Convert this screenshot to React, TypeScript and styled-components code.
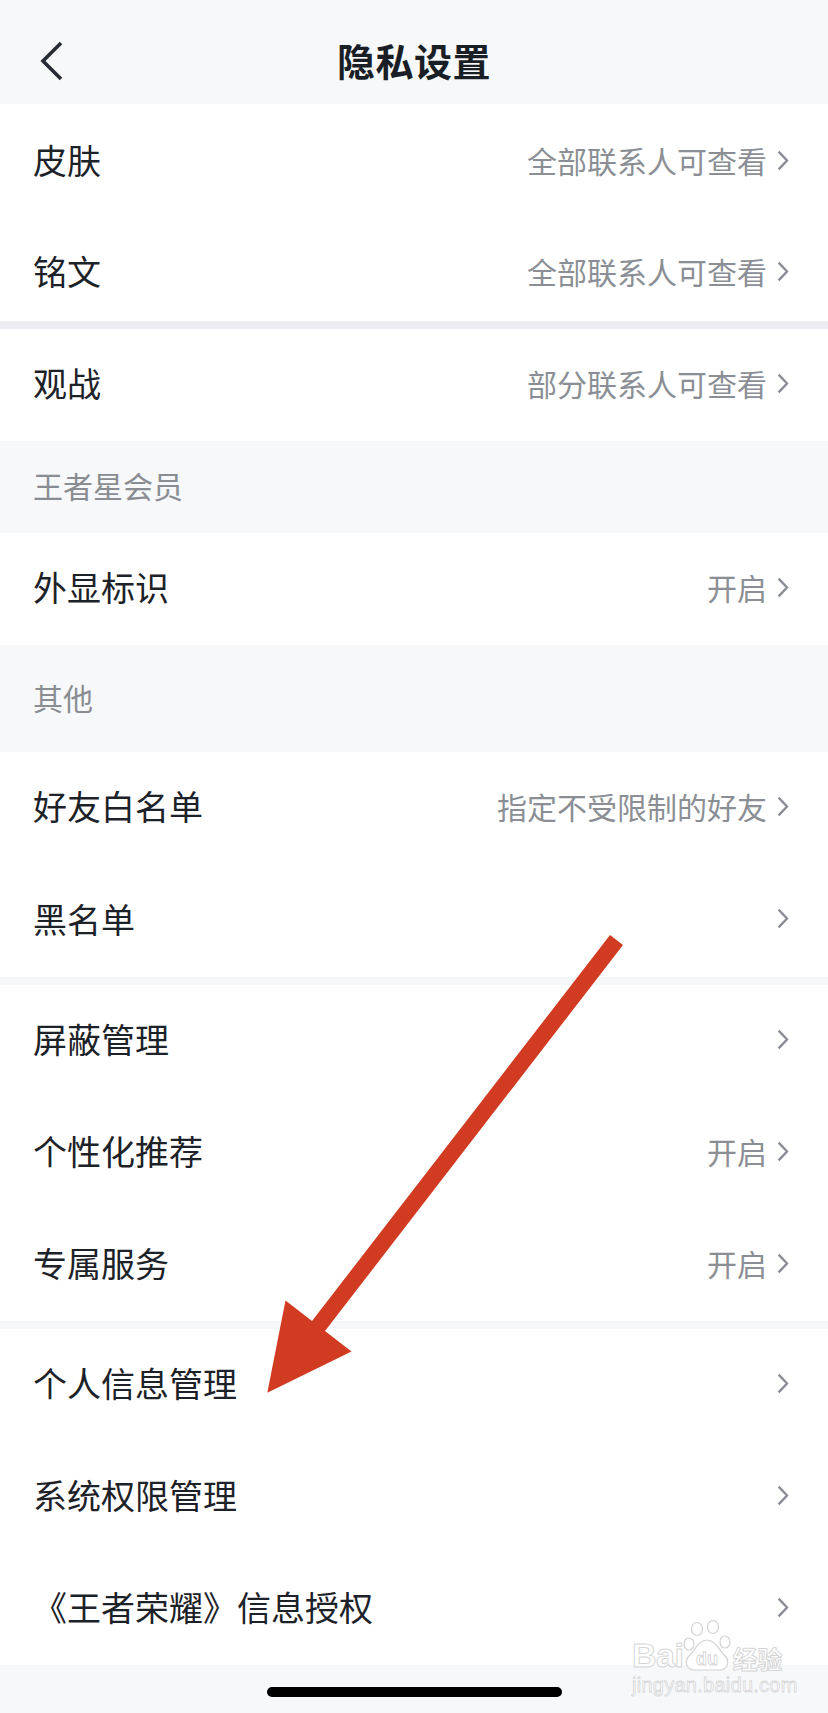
import React from "react";
import styled, { createGlobalStyle } from "styled-components";

const Global = createGlobalStyle`
  html, body { margin: 0; padding: 0; background: #f7f8fa; }
  body { font-family: "Noto Sans CJK SC", "Noto Sans", sans-serif; }
  * { box-sizing: border-box; }
`;

const Page = styled.div`
  position: relative;
  width: 828px;
  min-height: 1713px;
  background: #f7f8fa;
  overflow: hidden;
`;

const Header = styled.header`
  display: grid;
  grid-template-columns: 1fr auto 1fr;
  align-items: center;
  height: 104px;
  padding-top: 16px;
  background: #f7f8fa;
`;

const BackButton = styled.div`
  display: flex;
  align-items: center;
  padding-left: 40px;
  margin-top: 2px;
`;

const Title = styled.h1`
  margin: 0;
  font-size: 38px;
  line-height: 1;
  font-weight: 700;
  color: #1a1f26;
  letter-spacing: 0.5px;
`;

const Section = styled.section`
  background: #ffffff;
`;

const Row = styled.div<{ $h?: number; $pt?: number }>`
  display: flex;
  align-items: center;
  justify-content: space-between;
  height: ${(p) => p.$h ?? 112}px;
  padding: ${(p) => p.$pt ?? 0}px 39px 4px 33px;
`;

const Label = styled.span`
  font-size: 34px;
  line-height: 1;
  color: #1d2228;
  white-space: nowrap;
`;

const Trail = styled.div`
  display: flex;
  align-items: center;
`;

const Value = styled.span`
  font-size: 30px;
  line-height: 1;
  color: #8b8f95;
  margin-right: 10px;
  white-space: nowrap;
`;

const GroupTitle = styled.div<{ $h: number }>`
  display: flex;
  align-items: center;
  height: ${(p) => p.$h}px;
  padding: 0 0 4px 33px;
  font-size: 30px;
  line-height: 1;
  color: #898d92;
  background: #f7f8fa;
`;

const Gap = styled.div<{ $c: string }>`
  height: 8px;
  background: ${(p) => p.$c};
`;

const Bottom = styled.div`
  display: flex;
  justify-content: center;
  height: 48px;
  padding-top: 22px;
  background: #f7f8fa;
`;

const HomeBar = styled.div`
  width: 295px;
  height: 10px;
  border-radius: 5px;
  background: #000;
`;

const Overlay = styled.svg`
  position: absolute;
  left: 0;
  top: 0;
  pointer-events: none;
`;

const Watermark = styled.div`
  position: absolute;
  left: 632px;
  top: 1620px;
  display: flex;
  flex-direction: column;
  pointer-events: none;
`;

const MarkTop = styled.div`
  display: flex;
  align-items: flex-end;
`;

const MarkWord = styled.span<{ $size: number }>`
  font-family: "Liberation Sans", Arial, sans-serif;
  font-weight: 700;
  font-size: ${(p) => p.$size}px;
  line-height: 1;
  color: rgba(255, 255, 255, 0.85);
  -webkit-text-stroke: 1px rgba(200, 200, 200, 0.75);
  letter-spacing: -0.5px;
`;

const MarkCjk = styled.span`
  font-family: "Noto Sans CJK SC", sans-serif;
  font-weight: 700;
  font-size: 25px;
  line-height: 1;
  color: rgba(255, 255, 255, 0.85);
  -webkit-text-stroke: 1px rgba(200, 200, 200, 0.75);
  margin-left: 1px;
  margin-bottom: 1px;
`;

const MarkUrl = styled.span`
  font-family: "Liberation Sans", Arial, sans-serif;
  font-size: 21px;
  line-height: 1;
  color: rgba(255, 255, 255, 0.85);
  -webkit-text-stroke: 0.8px rgba(200, 200, 200, 0.75);
  letter-spacing: 0.3px;
  transform: scaleX(0.95);
  transform-origin: left center;
  white-space: nowrap;
  margin-top: 2px;
`;

const Chevron = () => (
  <svg width="12" height="21" viewBox="0 0 12 21">
    <polyline
      points="1.6,1.6 10,10.5 1.6,19.4"
      fill="none"
      stroke="#8a8e94"
      strokeWidth="2.4"
      strokeLinejoin="miter"
    />
  </svg>
);

const BackIcon = () => (
  <svg width="24" height="42" viewBox="0 0 24 42">
    <polyline
      points="21,3 3,21 21,39"
      fill="none"
      stroke="#262b33"
      strokeWidth="3.6"
      strokeLinejoin="miter"
    />
  </svg>
);

type Item = { label: string; value?: string; h?: number; pt?: number };

const ListRow = ({ label, value, h, pt }: Item) => (
  <Row $h={h} $pt={pt}>
    <Label>{label}</Label>
    <Trail>
      {value && <Value>{value}</Value>}
      <Chevron />
    </Trail>
  </Row>
);

const Group = ({ items }: { items: Item[] }) => (
  <Section>
    {items.map((it) => (
      <ListRow key={it.label} {...it} />
    ))}
  </Section>
);

export default function App() {
  return (
    <>
      <Global />
      <Page>
        <Header>
          <BackButton>
            <BackIcon />
          </BackButton>
          <Title>隐私设置</Title>
          <div />
        </Header>

        <Group
          items={[
            { label: "皮肤", value: "全部联系人可查看", h: 112, pt: 4 },
            { label: "铭文", value: "全部联系人可查看", h: 105, pt: 9 },
          ]}
        />
        <Gap $c="#ececf2" />
        <Group items={[{ label: "观战", value: "部分联系人可查看" }]} />
        <GroupTitle $h={92}>王者星会员</GroupTitle>
        <Group items={[{ label: "外显标识", value: "开启" }]} />
        <GroupTitle $h={107}>其他</GroupTitle>
        <Group
          items={[
            { label: "好友白名单", value: "指定不受限制的好友" },
            { label: "黑名单", h: 113 },
          ]}
        />
        <Gap $c="#f6f7f9" />
        <Group
          items={[
            { label: "屏蔽管理" },
            { label: "个性化推荐", value: "开启" },
            { label: "专属服务", value: "开启" },
          ]}
        />
        <Gap $c="#f6f7f9" />
        <Group
          items={[
            { label: "个人信息管理" },
            { label: "系统权限管理" },
            { label: "《王者荣耀》信息授权" },
          ]}
        />
        <Bottom>
          <HomeBar />
        </Bottom>

        <Watermark>
          <MarkTop>
            <MarkWord $size={34}>Bai</MarkWord>
            <svg width="48" height="52" viewBox="0 0 48 52">
              <g fill="rgba(255,255,255,0.85)" stroke="rgba(200,200,200,0.8)" strokeWidth="1.2">
                <ellipse cx="14" cy="9" rx="5.5" ry="6.5" />
                <ellipse cx="30" cy="7" rx="5.5" ry="6.5" />
                <ellipse cx="6" cy="24" rx="5" ry="6" />
                <ellipse cx="42" cy="22" rx="5" ry="6" />
                <path d="M24 20 C32 20 36 30 42 36 C47 41 45 50 36 50 L12 50 C3 50 1 41 6 36 C12 30 16 20 24 20 Z" />
              </g>
              <text
                x="24"
                y="45"
                textAnchor="middle"
                fontFamily="Liberation Sans, Arial, sans-serif"
                fontWeight="700"
                fontSize="18"
                fill="rgba(255,255,255,0.9)"
                stroke="rgba(200,200,200,0.8)"
                strokeWidth="0.8"
              >
                du
              </text>
            </svg>
            <MarkCjk>经验</MarkCjk>
          </MarkTop>
          <MarkUrl>jingyan.baidu.com</MarkUrl>
        </Watermark>

        <Overlay width="828" height="1713" viewBox="0 0 828 1713">
          <polygon
            points="610,935 623,945 325,1331 351.5,1351.5 267.3,1392.7 285.5,1300.5 312,1321"
            fill="#d03b21"
          />
        </Overlay>
      </Page>
    </>
  );
}
